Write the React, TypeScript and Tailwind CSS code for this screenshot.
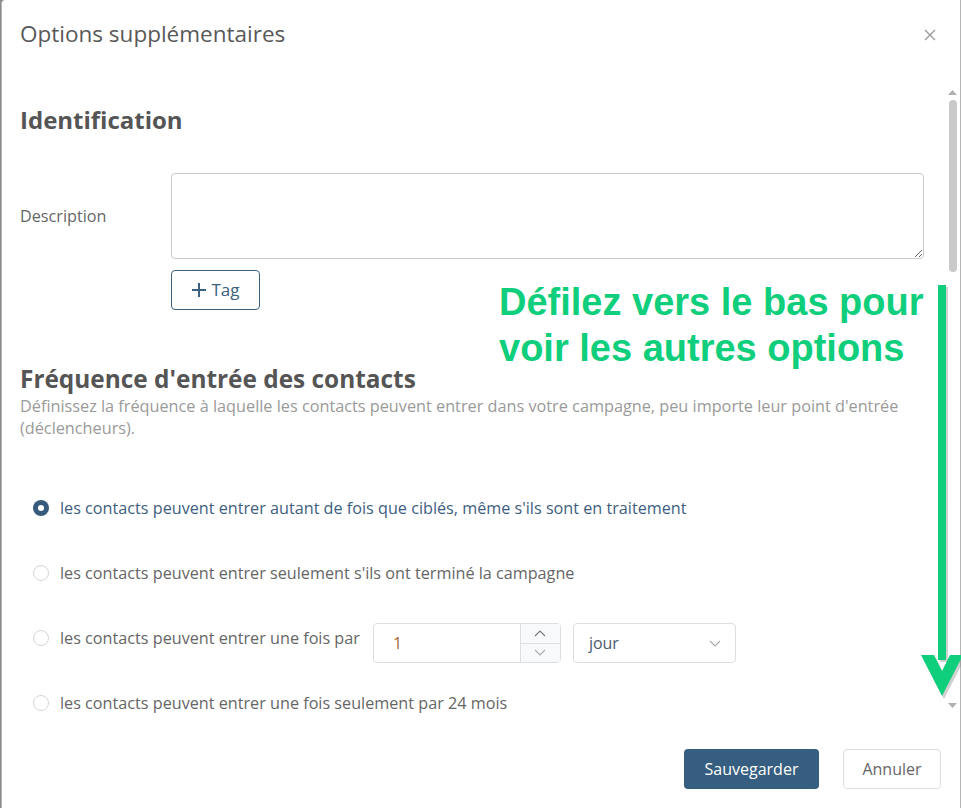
import React from 'react';

const font = { fontFamily: '"Open Sans", "Noto Sans", sans-serif' };

type RadioRowProps = {
  checked?: boolean;
  label: string;
  children?: React.ReactNode;
};

const RadioRow: React.FC<RadioRowProps> = ({ checked = false, label, children }) => (
  <div className="flex h-[65px] items-start pl-[13px]">
    {checked ? (
      <span className="mt-[3px] flex h-[16px] w-[16px] shrink-0 items-center justify-center rounded-full bg-[#375b7c]">
        <span className="h-[6px] w-[6px] rounded-full bg-white" />
      </span>
    ) : (
      <span className="mt-[3px] h-[16px] w-[16px] shrink-0 rounded-full border border-[#d6d6d6] bg-white" />
    )}
    <span
      className={`ml-[11px] text-[16.2px] leading-[22px] ${checked ? 'text-[#3e6080]' : 'text-[#666]'}`}
    >
      {label}
    </span>
    {children}
  </div>
);

const Chevron: React.FC<{ up?: boolean; className?: string }> = ({ up = false, className = '' }) => (
  <svg width="12" height="7" viewBox="0 0 12 7" className={className}>
    <path
      d={up ? 'M1 6L6 1L11 6' : 'M1 1L6 6L11 1'}
      fill="none"
      stroke="currentColor"
      strokeWidth="1.1"
    />
  </svg>
);

const Scrollbar: React.FC = () => (
  <div className="flex w-[15px] shrink-0 flex-col items-center">
    <svg className="mt-[5px]" width="9" height="5" viewBox="0 0 9 5">
      <path d="M0 5L4.5 0L9 5Z" fill="#b0b0b0" />
    </svg>
    <div className="mt-[5px] h-[172px] w-[8px] rounded-full bg-[#c9c9c9]" />
    <div className="flex-1" />
    <svg className="mb-[5px]" width="9" height="5" viewBox="0 0 9 5">
      <path d="M0 0L4.5 5L9 0Z" fill="#b0b0b0" />
    </svg>
  </div>
);

const ScrollHint: React.FC = () => (
  <>
    <div
      className="absolute left-[497px] top-[279px] text-[38px] font-bold leading-[46px] text-[#0fce7c]"
      style={{ fontFamily: '"Liberation Sans", Arial, sans-serif' }}
    >
      Défilez vers le bas pour
      <br />
      voir les autres options
    </div>
    <svg className="absolute left-[916px] top-[282px]" width="48" height="420" viewBox="0 0 48 420">
      <g fill="#7a7a7a" opacity="0.35">
        <rect x="22" y="5" width="8" height="375" />
        <path d="M5 376 L26 417 L47 376 L34 376 L26 392 L18 376 Z" />
      </g>
      <rect x="20" y="3" width="8" height="375" fill="#0fce7c" />
      <path d="M3 373 L24 414 L45 373 L32 373 L24 389 L16 373 Z" fill="#0fce7c" />
    </svg>
  </>
);

export default function App() {
  return (
    <div className="h-[808px] w-[961px] overflow-hidden bg-[#8a8a8a]" style={font}>
      <div className="relative ml-px flex h-[808px] w-[960px] flex-col rounded-tl-[4px] border-l border-r border-[#b5b5b5] bg-white">
        {/* header */}
        <div className="flex h-[85px] shrink-0 items-start justify-between pl-[18px] pr-[24px] pt-[20px]">
          <h1 className="text-[22.5px] font-normal leading-[28px] text-[#595959]">Options supplémentaires</h1>
          <button className="mt-[9px] text-[#9a9a9a]">
            <svg width="12" height="12" viewBox="0 0 12 12">
              <path d="M1 1L11 11M11 1L1 11" stroke="currentColor" strokeWidth="1.4" />
            </svg>
          </button>
        </div>

        {/* body */}
        <div className="flex h-[628px] shrink-0">
          <div className="flex-1 overflow-hidden pl-[18px]">
            <h2 className="pt-[19px] text-[24px] font-bold leading-[32px] text-[#555]">Identification</h2>

            <div className="mt-[37px] flex items-center">
              <label className="w-[151px] shrink-0 text-[16.2px] text-[#666]">Description</label>
              <textarea className="h-[86px] w-[753px] shrink-0 rounded-[4px] border border-[#c9cbd2] bg-white outline-none" />
            </div>
            <div className="mt-[11px] pl-[151px]">
              <button className="flex h-[40px] w-[89px] items-center justify-center gap-[4px] rounded-[4px] border border-[#3b6080] text-[17px] text-[#3b6080]">
                <svg width="16" height="16" viewBox="0 0 16 16">
                  <path d="M8 1V15M1 8H15" stroke="currentColor" strokeWidth="2" />
                </svg>
                Tag
              </button>
            </div>

            <h2 className="mt-[55px] text-[24.4px] font-bold leading-[28px] text-[#555]">
              Fréquence d'entrée des contacts
            </h2>
            <p className="mt-[2px] w-[915px] text-[16.25px] leading-[22px] text-[#9a9a9a]">
              Définissez la fréquence à laquelle les contacts peuvent entrer dans votre campagne, peu importe leur point
              d'entrée (déclencheurs).
            </p>

            <div className="mt-[58px] flex flex-col">
              <RadioRow checked label="les contacts peuvent entrer autant de fois que ciblés, même s'ils sont en traitement" />
              <RadioRow label="les contacts peuvent entrer seulement s'ils ont terminé la campagne" />
              <RadioRow label="les contacts peuvent entrer une fois par">
                <div className="-mt-[4px] ml-[13px] flex h-[40px] w-[188px] shrink-0 rounded-[4px] border border-[#dcdee3]">
                  <div className="flex flex-1 items-center pl-[19px] text-[16px] text-[#a3693a]">1</div>
                  <div className="flex w-[40px] flex-col border-l border-[#dcdee3] bg-[#f8f9fb]">
                    <div className="flex flex-1 items-center justify-center border-b border-[#dcdee3] text-[#777]">
                      <Chevron up />
                    </div>
                    <div className="flex flex-1 items-center justify-center text-[#aaa]">
                      <Chevron />
                    </div>
                  </div>
                </div>
                <div className="-mt-[4px] ml-[12px] flex h-[40px] w-[163px] shrink-0 items-center justify-between rounded-[4px] border border-[#dcdee3] pl-[15px] pr-[14px]">
                  <span className="text-[16px] text-[#4b5a6e]">jour</span>
                  <Chevron className="text-[#aaa]" />
                </div>
              </RadioRow>
              <RadioRow label="les contacts peuvent entrer une fois seulement par 24 mois" />
            </div>
          </div>
          <Scrollbar />
        </div>

        {/* footer */}
        <div className="flex flex-1 items-start justify-end gap-[24px] pr-[19px] pt-[36px]">
          <button className="h-[40px] w-[135px] rounded-[4px] bg-[#365e80] text-[16px] text-white">Sauvegarder</button>
          <button className="h-[40px] w-[98px] rounded-[4px] border border-[#dddddd] bg-white text-[16px] text-[#666]">
            Annuler
          </button>
        </div>

        <ScrollHint />
      </div>
    </div>
  );
}
